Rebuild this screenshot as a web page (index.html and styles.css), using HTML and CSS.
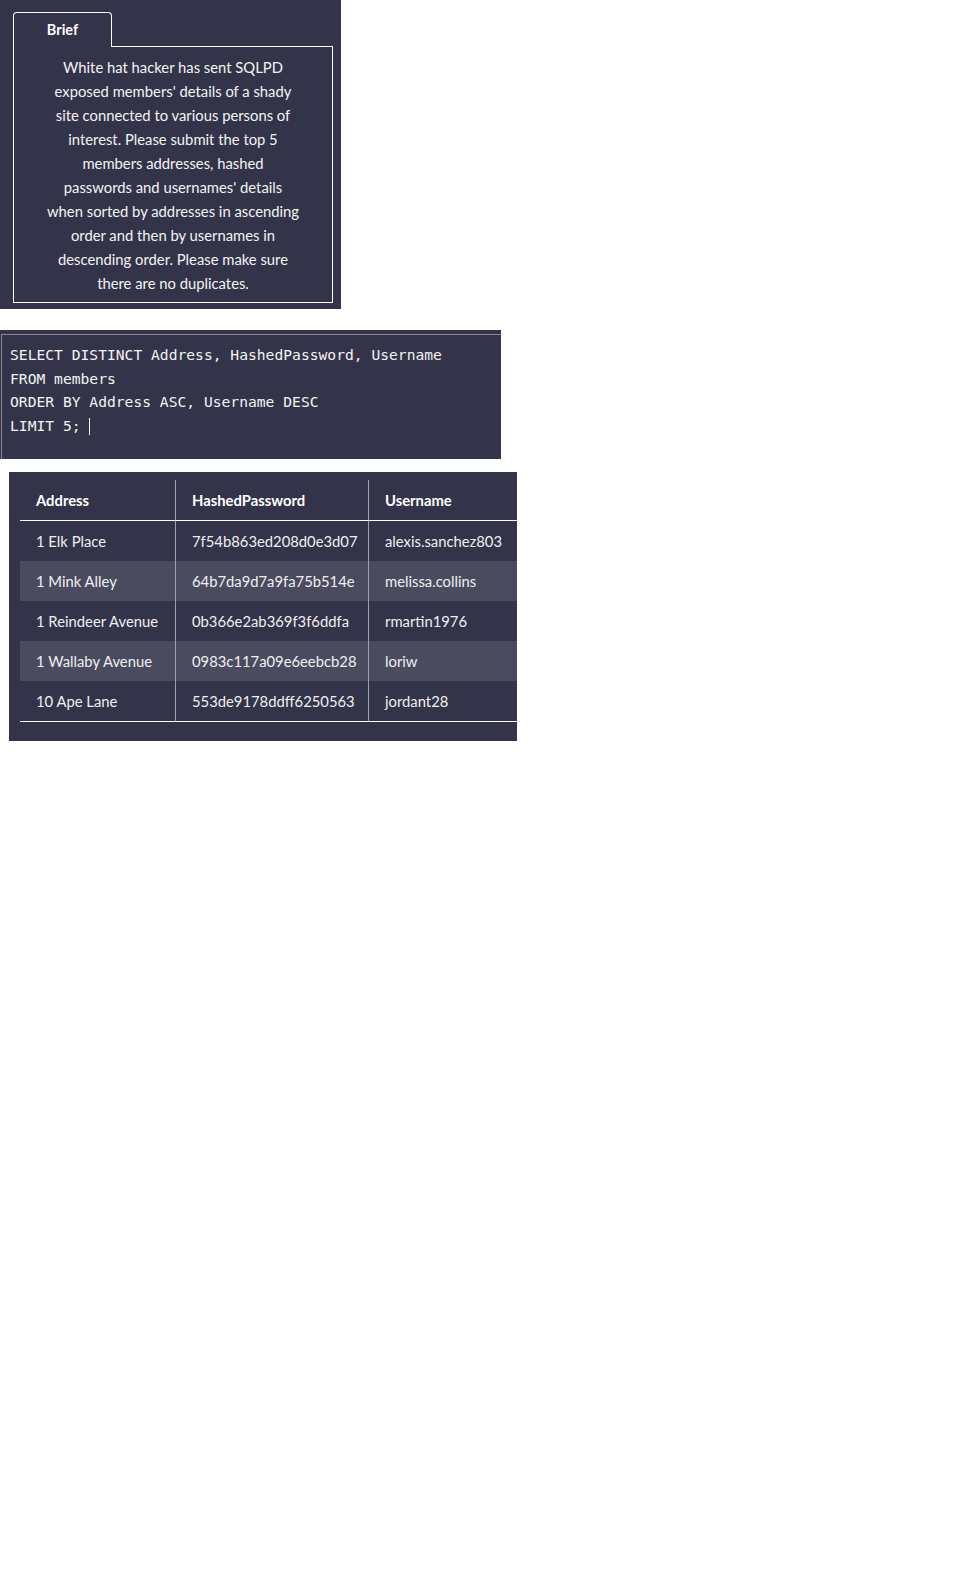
FILE: index.html
```html
<!DOCTYPE html>
<html>
<head>
<meta charset="utf-8">
<title>SQL Brief</title>
<link rel="stylesheet" href="styles.css">
</head>
<body>
<section class="brief-panel">
  <div class="tab">Brief</div>
  <div class="brief-box">
    <p class="brief-text">White hat hacker has sent SQLPD<br>exposed members' details of a shady<br>site connected to various persons of<br>interest. Please submit the top 5<br>members addresses, hashed<br>passwords and usernames' details<br>when sorted by addresses in ascending<br>order and then by usernames in<br>descending order. Please make sure<br>there are no duplicates.</p>
  </div>
</section>

<section class="editor">
  <div class="code"><div class="line">SELECT DISTINCT Address, HashedPassword, Username</div><div class="line">FROM members</div><div class="line">ORDER BY Address ASC, Username DESC</div><div class="line">LIMIT 5; <span class="caret"></span></div></div>
</section>

<section class="results">
  <table class="grid">
    <colgroup><col class="c1"><col class="c2"><col class="c3"></colgroup>
    <thead>
      <tr><th>Address</th><th>HashedPassword</th><th>Username</th></tr>
    </thead>
    <tbody>
      <tr><td>1 Elk Place</td><td>7f54b863ed208d0e3d07</td><td>alexis.sanchez803</td></tr>
      <tr><td>1 Mink Alley</td><td>64b7da9d7a9fa75b514e</td><td>melissa.collins</td></tr>
      <tr><td>1 Reindeer Avenue</td><td>0b366e2ab369f3f6ddfa</td><td>rmartin1976</td></tr>
      <tr><td>1 Wallaby Avenue</td><td>0983c117a09e6eebcb28</td><td>loriw</td></tr>
      <tr><td>10 Ape Lane</td><td>553de9178ddff6250563</td><td>jordant28</td></tr>
    </tbody>
  </table>
</section>
</body>
</html>
```
FILE: styles.css
```css
* { box-sizing: border-box; }

body {
  margin: 0;
  background: #ffffff;
  font-family: "Lato", "Open Sans", sans-serif;
  color: #f2f2f2;
}

/* ---------- Brief panel ---------- */
.brief-panel {
  width: 341px;
  height: 309px;
  background: #33334a;
  padding: 12px 8px 6px 13px;
  display: flex;
  flex-direction: column;
  align-items: flex-start;
}

.tab {
  position: relative;
  z-index: 1;
  width: 99px;
  height: 35px;
  margin-bottom: -1px;
  padding-bottom: 1px;
  background: #33334a;
  border: 1px solid #ffffff;
  border-bottom: none;
  border-radius: 4px 4px 0 0;
  display: flex;
  align-items: center;
  justify-content: center;
  font-weight: 700;
  font-size: 14.5px;
  color: #ffffff;
}

.brief-box {
  width: 320px;
  height: 257px;
  border: 1px solid #ffffff;
  padding: 8px 10px 7px;
}

.brief-text {
  margin: 0;
  text-align: center;
  font-size: 14.8px;
  line-height: 24px;
  color: #f4f4f4;
  white-space: nowrap;
}

/* ---------- Editor ---------- */
.editor {
  margin-top: 21px;
  width: 501px;
  height: 129px;
  background: #33334a;
  padding: 4px 0 0 1px;
  overflow: hidden;
}

.code {
  width: 560px;
  height: 160px;
  border-top: 1px solid #8a8a8e;
  border-left: 1px solid #8a8a8e;
  padding: 8px 8px;
  font-family: "DejaVu Sans Mono", "Liberation Mono", monospace;
  font-size: 14.65px;
  line-height: 23.7px;
  color: #f4f4f4;
  white-space: pre;
}

.caret {
  display: inline-block;
  width: 0;
  height: 17px;
  border-left: 1px solid #ffffff;
  vertical-align: -4px;
}

/* ---------- Results ---------- */
.results {
  margin: 13px 0 0 9px;
  width: 508px;
  background: #33334a;
  padding: 8px 0 19px 11px;
  overflow: hidden;
}

.grid {
  table-layout: fixed;
  width: 510px;
  border-collapse: separate;
  border-spacing: 0;
  font-size: 14.8px;
  color: #f0f0f0;
}

.grid col.c1 { width: 156px; }
.grid col.c2 { width: 193px; }
.grid col.c3 { width: 161px; }

.grid th,
.grid td {
  text-align: left;
  white-space: nowrap;
  padding: 0 0 0 16px;
  border-right: 1px solid #a0a0a8;
}

.grid th:last-child,
.grid td:last-child {
  border-right: none;
  padding-left: 16px;
}

.grid th {
  height: 41px;
  font-weight: 700;
  color: #ffffff;
  border-bottom: 1px solid #ffffff;
}

.grid td { height: 40px; }

.grid tbody tr:nth-child(even) td { background: #4b4b60; }

.grid tbody tr:last-child td {
  height: 41px;
  border-bottom: 1px solid #ffffff;
}
```
